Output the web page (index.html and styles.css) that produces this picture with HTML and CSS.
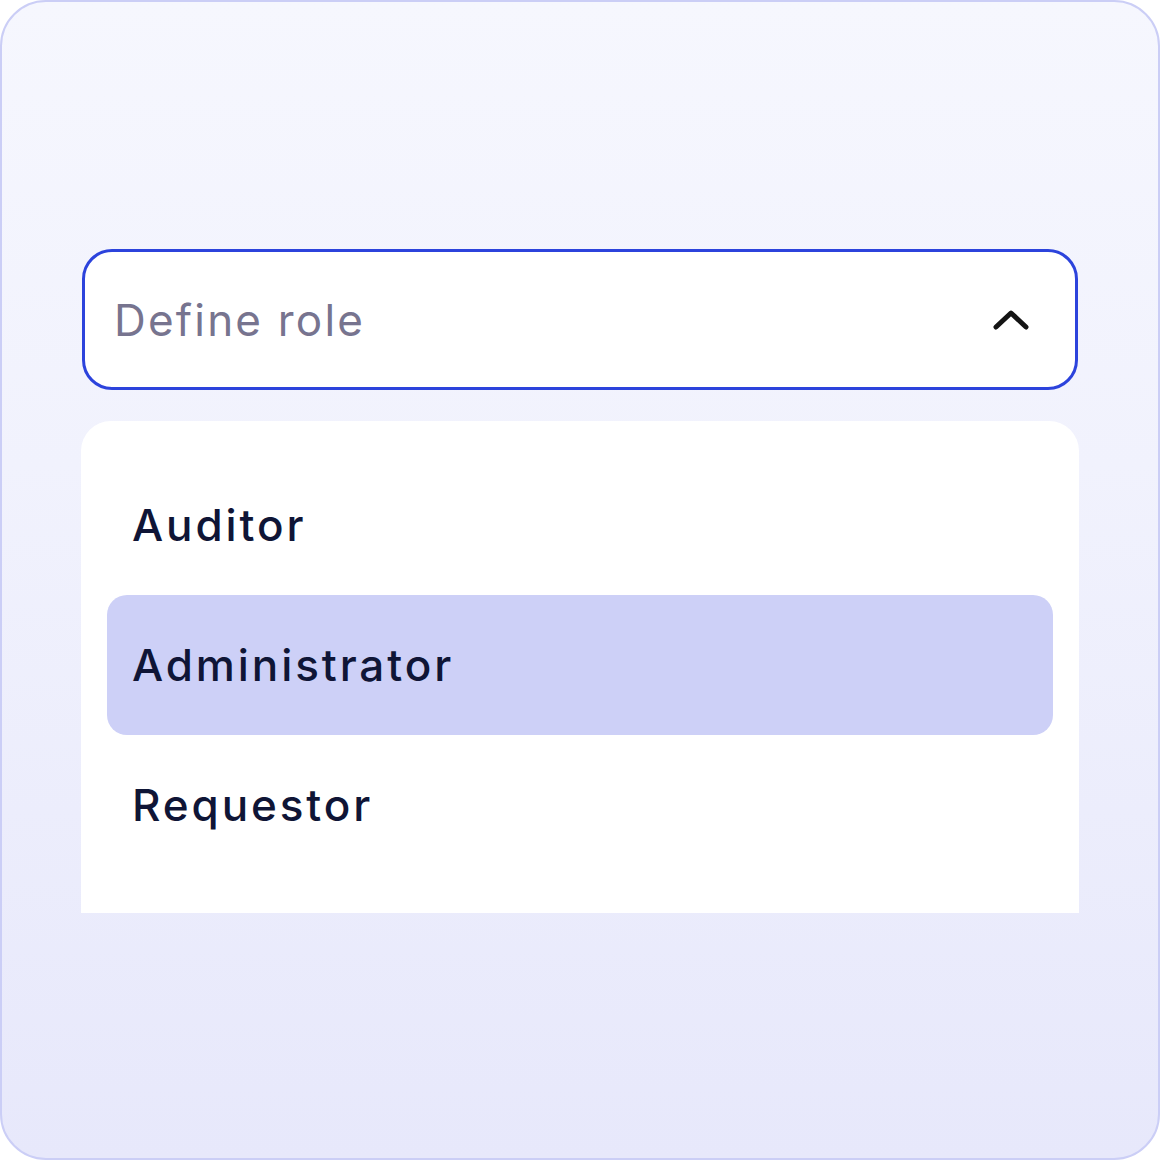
FILE: index.html
```html
<!DOCTYPE html>
<html>
<head>
<meta charset="utf-8">
<link rel="stylesheet" href="styles.css">
</head>
<body>
<div class="card">
  <div class="select">
    <span class="placeholder">Define role</span>
    <svg class="chevron" width="36" height="24" viewBox="0 0 36 24"><path d="M3 19 L18 5 L33 19" fill="none" stroke="#141414" stroke-width="5" stroke-linecap="round" stroke-linejoin="round"/></svg>
  </div>
  <div class="menu">
    <div class="option">Auditor</div>
    <div class="option active">Administrator</div>
    <div class="option">Requestor</div>
  </div>
</div>
</body>
</html>
```

FILE: styles.css
```css
html, body {
  margin: 0;
  padding: 0;
  background: #ffffff;
}
.card {
  box-sizing: border-box;
  width: 1160px;
  height: 1160px;
  border: 2px solid #cbcef6;
  border-radius: 46px;
  background: linear-gradient(180deg, #f6f7fe 0%, #f1f2fd 40%, #e7e8fb 100%);
  padding: 247px 79px 0 79px;
  font-family: "Inter", "Liberation Sans", sans-serif;
}
.select {
  box-sizing: border-box;
  height: 141px;
  margin: 0 1px;
  border: 3px solid #2c43dc;
  border-radius: 30px;
  background: #ffffff;
  display: flex;
  align-items: center;
  justify-content: space-between;
  padding: 0 46px 0 29px;
}
.placeholder {
  font-size: 44px;
  font-weight: 400;
  letter-spacing: 2.2px;
  color: #77748f;
}
.chevron {
  display: block;
}
.menu {
  margin-top: 31px;
  background: #ffffff;
  border-radius: 30px 30px 0 0;
  padding: 34px 26px 38px;
}
.option {
  height: 140px;
  display: flex;
  align-items: center;
  padding-left: 25px;
  font-size: 44px;
  font-weight: 500;
  letter-spacing: 2.9px;
  color: #0f1536;
  border-radius: 20px;
}
.option.active {
  background: #cdd0f7;
}
```
